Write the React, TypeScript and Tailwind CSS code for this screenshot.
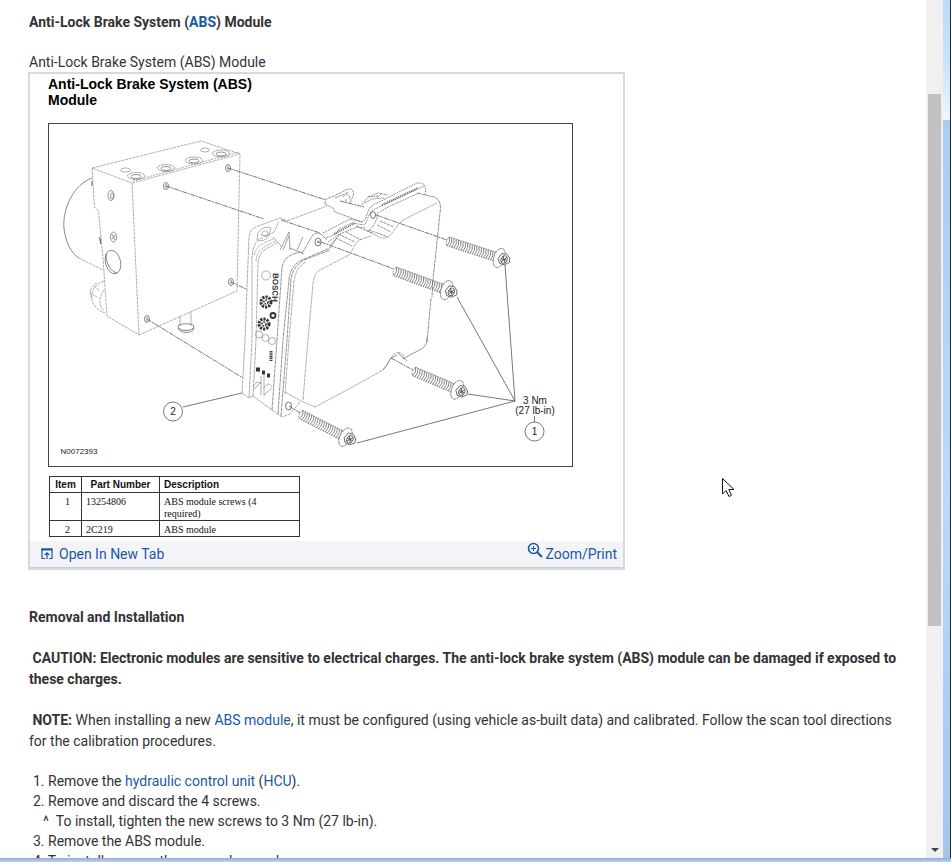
import type { ReactNode } from "react";

const parts = [
  { item: "1", number: "13254806", description: "ABS module screws (4 required)" },
  { item: "2", number: "2C219", description: "ABS module" },
];

function Link({ children }: { children: ReactNode }) {
  return (
    <a href="#" className="text-[#1c57a5] hover:underline">
      {children}
    </a>
  );
}

type ScrewProps = { x: number; y: number; angle: number; length: number };

function Screw({ x, y, angle, length }: ScrewProps) {
  const threads = [];
  for (let i = 1; i < length - 8; i += 2.4) {
    threads.push(<path key={i} d={`M${i} -4.5 q2.8 4.5 0.6 9`} />);
  }

  return (
    <g transform={`translate(${x} ${y}) rotate(${angle})`} stroke="#777">
      <path d={`M1 -4.5 H${length - 8} M1 4.5 H${length - 8} M1 -4.5 Q-2 0 1 4.5`} strokeDasharray="1.6 0.8" />
      {threads}
      <ellipse cx={length - 5} cy="0" rx="5.5" ry="10" fill="#fff" strokeDasharray="4 0.6" />
      <path d={`M${length - 4} -5 l5 -1 l4 3 l1 4 l-4 4 l-5 0 l-3 -4 z`} fill="#fff" stroke="#555" />
      <ellipse cx={length} cy="0" rx="3" ry="4" stroke="#555" />
      <path d={`M${length - 2} -3 l4 6 M${length + 2} -3 l-4 6 M${length - 3} 0 h6`} stroke="#444" />
    </g>
  );
}

function Knob({ cx, cy }: { cx: number; cy: number }) {
  return (
    <g>
      <circle cx={cx} cy={cy} r="5" stroke="#333" strokeWidth="3" strokeDasharray="2.2 1" />
      <circle cx={cx} cy={cy} r="2" stroke="#333" strokeWidth="1.6" strokeDasharray="1.6 1" />
    </g>
  );
}

function ModuleDiagram() {
  return (
    <svg
      viewBox="48 122 526 345"
      className="block w-[526px] max-w-full"
      fill="none"
      stroke="#999"
      strokeWidth="0.8"
      role="img"
      aria-label="Exploded view of the ABS module"
    >
      <rect x="48.5" y="123.5" width="524" height="343" stroke="#444" strokeWidth="1" />

      {/* hydraulic control unit */}
      <g strokeDasharray="3 0.8">
        <path d="M92 168 L201 141 L240 154 L132 183 Z" />
        <path d="M133 181 L239 152" strokeDasharray="2 1" />
        <path d="M132 183 L139 335 L237 291 L240 154" />
        <path d="M92 168 L94.5 207 L98.5 211 L103 258 L107 316 L139 335" />
        <path d="M79 258 L103 270" />
        <path d="M104 281 C94 285 90 292 92 300 C94 307 99 311 105 313 M104 290 C98 298 99 306 104 311 M97 283 C90 286 89 292 92 299 M94 286 l5 4 M92 294 l5 3" />
      </g>
      <path d="M92 178 C75 184 62 207 64 229 C66 243 71 253 79 258" stroke="#888" strokeWidth="1" />
      <path d="M92 181 v5 M99.5 237 l1 5 M100.5 239 v5" stroke="#777" strokeWidth="1.2" />
      <ellipse cx="113" cy="262" rx="7.5" ry="12" transform="rotate(-14 113 262)" stroke="#777" />
      <path d="M106 254 C106 263 110 271 117 273" stroke="#666" />
      <g stroke="#777">
        <ellipse cx="111" cy="195.5" rx="3" ry="5" />
        <ellipse cx="112" cy="196" rx="1.5" ry="3" />
        <ellipse cx="113.5" cy="237" rx="3" ry="5" />
        <path d="M112 234 l3 6 M115 235 l-3 4" />
      </g>
      <g>
        <ellipse cx="125.5" cy="170" rx="5" ry="2" />
        <ellipse cx="205" cy="150" rx="4.5" ry="2" />
        {[
          [136, 176],
          [166, 168],
          [194, 160.5],
          [221, 153.5],
        ].map(([x, y]) => (
          <g key={x} stroke="#777">
            <ellipse cx={x} cy={y} rx="8.5" ry="3.5" strokeDasharray="2 0.7" />
            <ellipse cx={x} cy={y + 0.5} rx="5" ry="2" />
          </g>
        ))}
      </g>
      <path d="M180 316 V326 M191 311 V326" />
      <path d="M178 326 C178 332 194 332 194 326 C193 323 180 323 178 326 M178 328 C180 334 193 334 194 328" stroke="#666" />

      <g stroke="#666">
        {[
          [166, 186],
          [228, 168],
          [147, 319],
          [231, 282],
        ].map(([x, y]) => (
          <g key={x}>
            <ellipse cx={x} cy={y} rx="2.5" ry="3.5" />
            <path d={`M${x} ${y - 2} v4`} />
          </g>
        ))}
      </g>

      {/* alignment lines */}
      <g stroke="#666" strokeWidth="0.9" strokeDasharray="5 0.8 2 0.8">
        <path d="M166 186 L264 219 M281 220 L320 233 M321 242 L394 269" />
        <path d="M228 168 L326 200 M340 201 L364 207 M376 215 L447 240" />
        <path d="M147 319 L243 378 M231 282 L246 289" />
        <path d="M391 358 L413 370 M289 406 L300 413" />
      </g>

      {/* module housing */}
      <g strokeDasharray="4 0.6">
        <path d="M242 393 L245 340 L249 237 C250 230 253 228 258 226 L280 218 L287 221 L327 206" />
        <path d="M249 398 L252 340 L252 257 C253 246 256 240 262 238 L274 232 L279 221" />
        <path d="M253 397 L256 340 L258 263 C259 255 262 251 266 249 L277 243" />
        <path d="M242 393 L249 398 L253 396 L272 410 L282 417 L290 414 L300 402" />
        <path d="M272 410 L277 340 L282 267 C284 259 288 256 296 253 L303 252 L311 238 C313 233 319 231 323 236 L327 240" stroke="#777" />
        <path d="M278 414 L283 340 L289 280 C290 269 295 263 302 260 L330 248 L336 239" stroke="#777" />
        <path d="M281 416 L287 340 L291 279 C293 268 298 264 304 260 L330 250" stroke="#777" />
        <path d="M285 394 L289 340 L294 281 C296 270 299 266 306 262" />
        <path d="M285 392 L301 401 L315 407 L347 390 L383 370 C389 364 390 356 396 353 C401 351 405 355 403 359" />
        <path d="M303 400 L308 340 L313 284 C314 276 316 272 320 270 L349 255 C352 252 354 244 359 240 L371 236" />
        <path d="M366 230 L381 238 C388 239 391 235 394 230 C398 226 400 221 405 219 L437 203" />
        <path d="M417 193 L434 197 C441 200 441 206 440 213 L433 280 L432 297" stroke="#777" />
        <path d="M431 298 L427 342" stroke="#777" />
      </g>
      <path d="M427 338 C426 350 423 347 403 359 M391 358 L397 355 M391 358 C388 363 386 366 383 370 M398 353 L407 361" stroke="#777" />
      <path d="M258 233 C261 228 267 226 271 228 L269 235 C267 240 261 242 257 240 Z M261 235 C262 231 266 230 268 232 L267 236 Z" />
      <path d="M280 250 L289 232 L290 250 M283 250 L289 236 M303 237 L297 250 M273 237 L282 247 M290 248 L304 254" stroke="#888" />
      <path d="M254 255 C256 247 261 244 273 239 M256 261 C257 250 263 247 276 241" strokeDasharray="2 0.7" />
      <ellipse cx="318" cy="242" rx="3" ry="4" stroke="#555" />
      <circle cx="318.5" cy="242" r="1" stroke="#555" />

      {/* cover flange and gasket */}
      <path d="M325 204 C325 199 327 198 332 197 L346 190 C352 187 355 191 353 196 L350 203 M343 197 C346 193 350 194 350 200 M346 199 V203 M325 204 L333 208 L335 212 L362 222 M335 198 L349 192" stroke="#777" strokeDasharray="3 0.7" />
      <path d="M362 205 L368 197 L378 193 L388 195 M365 203 L372 199 L384 198 M368 197 L378 196 M377 198 L382 193" stroke="#777" strokeDasharray="2 0.7" />
      <g stroke="#777" strokeDasharray="2 0.8">
        <path d="M323 233 L350 219 L362 222 C367 221 366 210 373 205 L417 183 C424 182 427 186 425 195" />
        <path d="M326 238 L336 234 L339 229 L352 223 L364 225 C368 222 367 215 373 210 L424 186" />
        <path d="M328 242 L340 234 L357 227 L366 228 M380 212 L388 207 L419 193" />
        <path d="M378 212 C377 219 375 226 368 231 M330 246 L336 239 L340 234" />
        <path d="M382 205 L418 188" stroke="#666" strokeWidth="2" strokeDasharray="1 1" />
        <path d="M334 234 L355 223" stroke="#666" strokeWidth="2" strokeDasharray="1 1" />
      </g>
      <ellipse cx="373" cy="215" rx="2.5" ry="3.5" stroke="#555" />
      <path d="M336 238 L352 246 M338 234 L355 242 M346 232 L361 240 M380 221 L394 227 M377 225 L391 232 M356 226 L372 233 M369 230 L388 237" stroke="#777" strokeDasharray="3 0.8" />

      {/* label face */}
      <circle cx="266" cy="275.5" r="4.5" />
      <text
        transform="translate(273 273) rotate(92)"
        fill="#333"
        stroke="none"
        fontFamily="Liberation Sans, sans-serif"
        fontWeight="700"
        fontSize="8"
      >
        BOSCH
      </text>
      <Knob cx={266} cy={302} />
      <Knob cx={264} cy={324} />
      <circle cx="273" cy="315.5" r="2.5" stroke="#333" strokeWidth="1.8" />
      <circle cx="259" cy="334.5" r="3.5" />
      <circle cx="265.5" cy="338" r="3.5" />
      <circle cx="272" cy="341" r="3.5" />
      <path d="M271 351 v10" stroke="#444" strokeWidth="3" strokeDasharray="1.5 0.7" />
      <path d="M256 369.5 h4 M262 372.5 h3 M267 375.5 h3" stroke="#333" strokeWidth="4" />
      <path d="M261 376 V395 M264 374 V396 M253 387 C255 382 259 381 261 384 M264 388 C267 383 270 383 272 387 M254 389 L261 382 M264 395 L272 388" />
      <ellipse cx="288.5" cy="406" rx="3" ry="4" stroke="#555" />

      <Screw x={447} y={241} angle={18} length={60} />
      <Screw x={394} y={271} angle={20} length={61} />
      <Screw x={413} y={371} angle={23} length={53} />
      <Screw x={300} y={414} angle={27} length={56} />

      {/* callouts */}
      <g stroke="#555" strokeWidth="0.8">
        <path d="M505 265 L515 401 M457 297 L515 401 M468 394 L515 401 M357 443 L515 401" />
        <path d="M183 407 L242 393 M534.5 416 V422" />
        <circle cx="173" cy="411.5" r="9.5" />
        <circle cx="534.5" cy="431.5" r="9.5" />
      </g>
      <g fill="#222" stroke="none" fontFamily="Liberation Sans, sans-serif" fontSize="10" textAnchor="middle">
        <text x="173" y="415">2</text>
        <text x="534.5" y="435">1</text>
        <text x="535" y="404">3 Nm</text>
        <text x="535" y="414">(27 lb-in)</text>
        <text x="79" y="454" fontSize="8">N0072393</text>
      </g>
    </svg>
  );
}

function PartsTable() {
  return (
    <table className="mt-[9px] ml-px w-[251px] table-fixed border-collapse border border-[#333] text-left font-['Liberation_Serif',serif] text-[10px] leading-3 text-[#111]">
      <thead className="font-['Liberation_Sans',sans-serif]">
        <tr className="h-4">
          <th className="w-8 border border-[#333] text-center">Item</th>
          <th className="w-[78px] border border-[#333] text-center">Part Number</th>
          <th className="border border-[#333] pl-1">Description</th>
        </tr>
      </thead>
      <tbody>
        {parts.map((part) => (
          <tr key={part.item} className="align-top">
            <td className="border border-[#333] pt-[3px] pl-1 text-center">{part.item}</td>
            <td className="border border-[#333] pt-[3px] pl-1">{part.number}</td>
            <td className="border border-[#333] pt-[3px] pr-7 pl-1">{part.description}</td>
          </tr>
        ))}
      </tbody>
    </table>
  );
}

function Figure() {
  return (
    <figure className="-ml-px w-[597px] max-w-full border-2 border-[#d9d9d9] bg-white">
      <div className="px-[18px] pt-[2px] pb-1">
        <h3 className="w-56 font-['Liberation_Sans',sans-serif] text-[14px] leading-4 font-bold text-black">
          Anti-Lock Brake System (ABS) Module
        </h3>
        <div className="mt-[14px]">
          <ModuleDiagram />
        </div>
        <PartsTable />
      </div>
      <figcaption className="flex h-[27px] items-center justify-between border-b border-[#cfcfd4] bg-[#f3f4f8] pr-[6px] pl-[11px]">
        <a href="#" className="flex items-center gap-[6px] text-[#1c57a5]">
          <svg width="12" height="12" viewBox="0 0 12 12" fill="none" stroke="currentColor">
            <path d="M4 10.5 H1 V1 H11 V10.5 H8" strokeWidth="1.2" />
            <path d="M0.5 1.5 H11.5" strokeWidth="2" />
            <path d="M6 11 V5 M3.8 7 L6 4.8 L8.2 7" strokeWidth="1.2" />
          </svg>
          Open In New Tab
        </a>
        <a href="#" className="flex items-center gap-[2px] text-[#1c57a5]">
          <svg className="mb-2" width="16" height="16" viewBox="0 0 16 16" fill="none" stroke="currentColor">
            <circle cx="6.5" cy="6.5" r="5" strokeWidth="1.6" />
            <path d="M10 10 L15 15" strokeWidth="2" />
            <path d="M4 6.5 H9 M6.5 4 V9" strokeWidth="1" />
          </svg>
          Zoom/Print
        </a>
      </figcaption>
    </figure>
  );
}

function ScrollBar() {
  return (
    <div className="flex w-[17px] shrink-0 flex-col items-center bg-[#f0f0f0]">
      <div className="h-[11%]" />
      <div className="h-[62%] w-[13px] bg-[#c1c1c1]" />
      <button aria-label="Scroll down" className="mt-auto flex h-[17px] w-full items-center justify-center">
        <svg width="8" height="4" viewBox="0 0 8 4" fill="#404040">
          <path d="M0 0 H8 L4 4 Z" />
        </svg>
      </button>
    </div>
  );
}

export default function App() {
  return (
    <div className="relative flex h-screen flex-col overflow-hidden bg-white font-['Roboto',sans-serif] text-[14px] leading-5 text-[#333]">
      <div className="flex min-h-0 flex-1">
        <main className="min-w-0 flex-1 overflow-hidden pt-3 pr-5 pl-[29px]">
          <h1 className="font-bold">
            Anti-Lock Brake System (<Link>ABS</Link>) Module
          </h1>
          <p className="mt-5">Anti-Lock Brake System (ABS) Module</p>
          <Figure />

          <h2 className="mt-[37px] leading-[21px] font-bold">Removal and Installation</h2>
          <p className="mt-5 leading-[21px] font-bold">
            &nbsp;CAUTION: Electronic modules are sensitive to electrical charges. The anti-lock brake system (ABS)
            module can be damaged if exposed to these charges.
          </p>
          <p className="mt-5 leading-[21px]">
            <b className="font-bold">&nbsp;NOTE:</b> When installing a new <Link>ABS module</Link>, it must be
            configured (using vehicle as-built data) and calibrated. Follow the scan tool directions for the
            calibration procedures.
          </p>

          <div className="mt-[19px] pl-1">
            <p>
              1. Remove the <Link>hydraulic control unit</Link> (<Link>HCU</Link>).
            </p>
            <p>2. Remove and discard the 4 screws.</p>
            <p className="pl-[10px]">^ &nbsp;To install, tighten the new screws to 3 Nm (27 lb-in).</p>
            <p>3. Remove the ABS module.</p>
            <p>4. To install, reverse the removal procedure.</p>
          </div>
        </main>
        <ScrollBar />
        <div className="flex w-2 shrink-0 flex-col border-r border-[#1d2733]">
          <div className="h-[14%] bg-linear-to-b from-[#b9dafa] via-[#c9e3fc] to-[#eef6fe]" />
          <div className="flex-1 bg-linear-to-b from-[#a9cdf0] via-[#b9dafa] to-[#a3c6ea]" />
        </div>
      </div>
      <div className="h-1 shrink-0 bg-linear-to-b from-[#8fb0d3] to-[#b5d6f7]" />

      <svg className="absolute top-[478px] left-[722px]" width="13" height="20" viewBox="0 0 13 20">
        <path d="M0.5 0.5 V16 L4 12.5 L7 18.5 L9.5 17.3 L6.8 11.5 H12 Z" fill="#fff" stroke="#111" />
      </svg>
    </div>
  );
}
